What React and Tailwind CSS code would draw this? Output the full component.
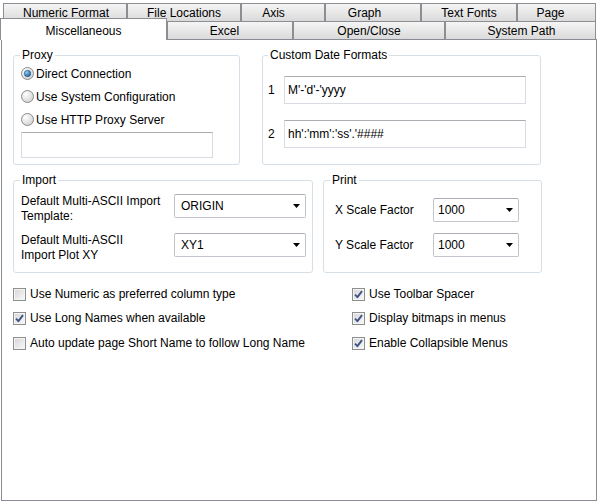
import React from 'react'

const topTabs = [
  { name: 'Numeric Format', w: 'w-[124px]', pad: 'pl-[2px]' },
  { name: 'File Locations', w: 'w-[114px]', pad: '' },
  { name: 'Axis', w: 'w-[84px]', pad: 'pr-[19px]' },
  { name: 'Graph', w: 'w-[96px]', pad: 'pr-[17px]' },
  { name: 'Text Fonts', w: 'w-[96px]', pad: '' },
  { name: 'Page', w: 'w-[79px]', pad: 'pr-[12px]' },
]

const lowTabs = [
  { name: 'Excel', w: 'w-[126px]', pad: 'pr-[11px]' },
  { name: 'Open/Close', w: 'w-[152px]', pad: '' },
  { name: 'System Path', w: 'w-[151px]', pad: 'pl-[2px]' },
]

const Radio = ({ checked }) => (
  <svg width="13" height="13" viewBox="0 0 13 13" className="shrink-0">
    <defs>
      <radialGradient id="rbg" cx="0.35" cy="0.3" r="0.8">
        <stop offset="0" stopColor="#ffffff" />
        <stop offset="1" stopColor="#cfcfcf" />
      </radialGradient>
      <radialGradient id="rdot" cx="0.35" cy="0.3" r="0.8">
        <stop offset="0" stopColor="#8fd0f7" />
        <stop offset="1" stopColor="#18578f" />
      </radialGradient>
    </defs>
    <circle cx="6.5" cy="6.5" r="6" fill="url(#rbg)" stroke="#8a8a8a" />
    {checked && <circle cx="6.5" cy="6.5" r="3.2" fill="url(#rdot)" stroke="#1d4f7e" strokeWidth="0.6" />}
  </svg>
)

const Check = ({ checked }) => (
  <svg width="13" height="13" viewBox="0 0 13 13" className="shrink-0">
    <defs>
      <linearGradient id="cbg" x1="0" y1="0" x2="1" y2="1">
        <stop offset="0" stopColor="#d8d8d8" />
        <stop offset="1" stopColor="#f7f7f7" />
      </linearGradient>
    </defs>
    <rect x="0.5" y="0.5" width="12" height="12" fill="#f4f4f4" stroke="#8e8f8f" />
    <rect x="2" y="2" width="9" height="9" fill="url(#cbg)" />
    {checked && (
      <path d="M3 6.6 L5.4 9.2 L10 3.2" fill="none" stroke="#3e5486" strokeWidth="1.9" strokeLinejoin="round" />
    )}
  </svg>
)

const Arrow = () => (
  <svg width="7" height="4" viewBox="0 0 7 4" className="shrink-0">
    <path d="M0 0h7L3.5 4z" fill="#000" />
  </svg>
)

const Select = ({ value, w, pl }) => (
  <div className={`${w} h-[24px] flex items-center justify-between ${pl} pr-[5px] bg-white border border-[#c2c6cc] border-t-[#acb0b6] rounded-[2px] shrink-0`}>
    <span>{value}</span>
    <Arrow />
  </div>
)

const CheckRow = ({ checked, label }) => (
  <div className="flex items-center gap-[4px] h-[16px]">
    <Check checked={checked} />
    <span>{label}</span>
  </div>
)

export default function App() {
  return (
    <div className="w-[598px] h-[502px] bg-white pt-[3px] text-[12px] text-black flex flex-col" style={{ fontFamily: '"Liberation Sans", Arial, sans-serif' }}>
      {/* first tab row */}
      <div className="flex pl-[3px] h-[18px]">
        {topTabs.map((t) => (
          <div key={t.name} className={`${t.w} ${t.pad} h-[18px] flex items-center justify-center border border-b-0 border-[#8c8e94] bg-gradient-to-b from-[#f5f5f5] to-[#dadada] leading-none`}>
            {t.name}
          </div>
        ))}
      </div>

      {/* second tab row */}
      <div className="flex h-[18px] items-start">
        <div className="relative z-10 w-[167px] h-[22px] -mt-[3px] flex items-start justify-center pt-[3px] bg-white border border-b-0 border-[#8c8e94]">
          Miscellaneous
        </div>
        {lowTabs.map((t) => (
          <div key={t.name} className={`${t.w} ${t.pad} h-[18px] flex items-center justify-center border border-b-0 border-[#8c8e94] bg-gradient-to-b from-[#f5f5f5] to-[#dadada] leading-none`}>
            {t.name}
          </div>
        ))}
      </div>

      {/* page */}
      <div className="ml-[1px] w-[596px] h-[462px] border border-[#898c95] pt-[8px] pl-[11px]">
        <div className="flex gap-[22px]">
          <fieldset className="w-[227px] h-[117px] border border-[#d5dfe5] rounded-[3px]">
            <legend className="ml-[6px] px-[2px] leading-[14px]">Proxy</legend>
            <div className="flex flex-col pl-[7px]">
              <div className="flex items-center gap-[2px] h-[23px]">
                <Radio checked />
                <span>Direct Connection</span>
              </div>
              <div className="flex items-center gap-[2px] h-[23px]">
                <Radio />
                <span>Use System Configuration</span>
              </div>
              <div className="flex items-center gap-[2px] h-[23px]">
                <Radio />
                <span>Use HTTP Proxy Server</span>
              </div>
              <div className="mt-[1px] w-[192px] h-[26px] border border-[#d9dde3] border-t-[#abadb3]" />
            </div>
          </fieldset>

          <fieldset className="w-[279px] h-[117px] border border-[#d5dfe5] rounded-[3px]">
            <legend className="ml-[5px] px-[2px] leading-[14px]">Custom Date Formats</legend>
            <div className="flex flex-col gap-[16px] mt-[14px] pl-[5px]">
              <div className="flex items-center">
                <span className="w-[16px]">1</span>
                <div className="w-[242px] h-[28px] flex items-center px-[3px] border border-[#d9dde3] border-t-[#abadb3]">M'-'d'-'yyyy</div>
              </div>
              <div className="flex items-center">
                <span className="w-[16px]">2</span>
                <div className="w-[242px] h-[28px] flex items-center px-[3px] border border-[#d9dde3] border-t-[#abadb3]">hh':'mm':'ss'.'####</div>
              </div>
            </div>
          </fieldset>
        </div>

        <div className="flex gap-[10px] mt-[8px]">
          <fieldset className="w-[300px] h-[100px] border border-[#d5dfe5] rounded-[3px]">
            <legend className="ml-[6px] px-[2px] leading-[14px]">Import</legend>
            <div className="flex flex-col gap-[9px] mt-[7px] pl-[7px]">
              <div className="flex items-start">
                <div className="w-[153px] leading-[15px]">Default Multi-ASCII Import<br />Template:</div>
                <Select value="ORIGIN" w="w-[132px]" pl="pl-[6px]" />
              </div>
              <div className="flex items-start">
                <div className="w-[153px] leading-[15px]">Default Multi-ASCII<br />Import Plot XY</div>
                <Select value="XY1" w="w-[132px]" pl="pl-[6px]" />
              </div>
            </div>
          </fieldset>

          <fieldset className="w-[219px] h-[100px] border border-[#d5dfe5] rounded-[3px]">
            <legend className="ml-[6px] px-[2px] leading-[14px]">Print</legend>
            <div className="flex flex-col gap-[11px] mt-[11px] pl-[11px]">
              <div className="flex items-center">
                <div className="w-[98px]">X Scale Factor</div>
                <Select value="1000" w="w-[86px]" pl="pl-[4px]" />
              </div>
              <div className="flex items-center">
                <div className="w-[98px]">Y Scale Factor</div>
                <Select value="1000" w="w-[86px]" pl="pl-[4px]" />
              </div>
            </div>
          </fieldset>
        </div>

        <div className="flex mt-[13px]">
          <div className="w-[339px] flex flex-col gap-[8px]">
            <CheckRow label="Use Numeric as preferred column type" />
            <CheckRow checked label="Use Long Names when available" />
            <div className="mt-[1px]">
              <CheckRow label="Auto update page Short Name to follow Long Name" />
            </div>
          </div>
          <div className="flex flex-col gap-[8px]">
            <CheckRow checked label="Use Toolbar Spacer" />
            <CheckRow checked label="Display bitmaps in menus" />
            <div className="mt-[1px]">
              <CheckRow checked label="Enable Collapsible Menus" />
            </div>
          </div>
        </div>
      </div>
    </div>
  )
}
